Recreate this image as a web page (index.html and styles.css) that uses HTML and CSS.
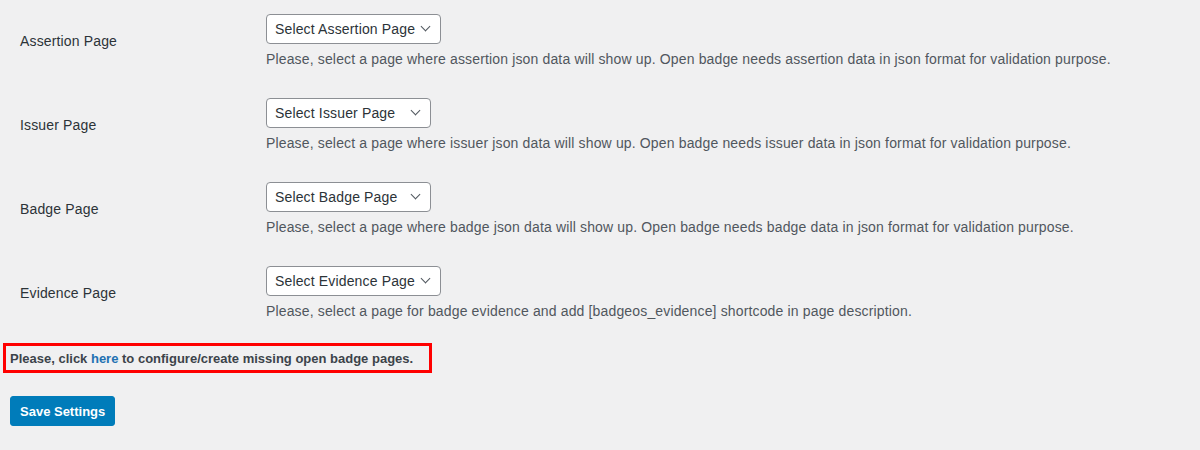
FILE: index.html
```html
<!DOCTYPE html>
<html lang="en">
<head>
    <meta charset="UTF-8">
    <title>Open Badge Settings</title>
    <link rel="stylesheet" href="styles.css">
</head>
<body>

    <div class="settings">
        <div class="row">
            <div class="label">Assertion Page</div>
            <div class="field">
                <div class="select">Select Assertion Page <span class="arrow"></span></div>
                <p class="description">Please, select a page where assertion json data will show up. Open badge needs assertion data in json format for validation purpose.</p>
            </div>
        </div>
        <div class="row">
            <div class="label">Issuer Page</div>
            <div class="field">
                <div class="select w165">Select Issuer Page <span class="arrow"></span></div>
                <p class="description">Please, select a page where issuer json data will show up. Open badge needs issuer data in json format for validation purpose.</p>
            </div>
        </div>
        <div class="row">
            <div class="label">Badge Page</div>
            <div class="field">
                <div class="select w165">Select Badge Page <span class="arrow"></span></div>
                <p class="description">Please, select a page where badge json data will show up. Open badge needs badge data in json format for validation purpose.</p>
            </div>
        </div>
        <div class="row">
            <div class="label">Evidence Page</div>
            <div class="field">
                <div class="select">Select Evidence Page <span class="arrow"></span></div>
                <p class="description">Please, select a page for badge evidence and add [badgeos_evidence] shortcode in page description.</p>
            </div>
        </div>

        <div class="notice">Please, click <a href="#">here</a> to configure/create missing open badge pages.</div>

        <button class="save-button">Save Settings</button>
    </div>

</body>
</html>
```

FILE: styles.css
```css
body {
    margin: 0;
    background: #f0f0f1;
    font-family: "Liberation Sans", Arial, sans-serif;
    font-size: 14px;
    letter-spacing: 0.15px;
    color: #1d2327;
}
.settings {
    padding: 0 0 0 10px;
}
.row {
    display: grid;
    grid-template-columns: 256px 1fr;
    align-items: center;
    height: 84px;
}
.label {
    padding: 0 0 3px 10px;
    color: #2c3338;
}
.field {
    padding-bottom: 2px;
}
.select {
    display: inline-flex;
    align-items: center;
    justify-content: space-between;
    box-sizing: border-box;
    height: 30px;
    padding: 0 9px 0 8px;
    background: #fff;
    border: 1px solid #8c8f94;
    border-radius: 4px;
    color: #2c3338;
    gap: 7px;
}
.w165 { width: 165px; }
.arrow {
    width: 6px;
    height: 6px;
    border-right: 1.5px solid #50575e;
    border-bottom: 1.5px solid #50575e;
    transform: rotate(45deg);
    margin: -4px 2px 0 0;
}
.description {
    margin: 5px 0 0;
    color: #50575e;
    line-height: 20px;
}
.notice {
    margin: 7px 0 0 -7px;
    width: 429px;
    height: 30px;
    box-sizing: border-box;
    border: 3px solid #f00;
    padding: 0 0 0 4px;
    display: flex;
    align-items: center;
    font-size: 13px;
    font-weight: bold;
    letter-spacing: 0;
    color: #3c434a;
    white-space: pre;
}
.notice a {
    color: #2271b1;
    text-decoration: none;
}
.save-button {
    margin-top: 23px;
    height: 30px;
    padding: 0 9px;
    font-family: inherit;
    font-size: 13px;
    font-weight: bold;
    color: #fff;
    background: #007cba;
    border: 1px solid #007cba;
    border-radius: 3px;
    cursor: pointer;
}
```
